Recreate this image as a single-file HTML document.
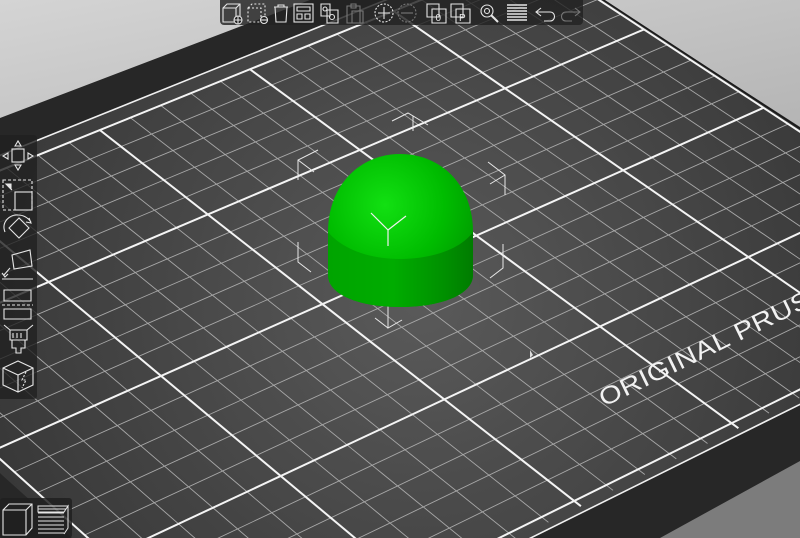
<!DOCTYPE html>
<html><head><meta charset="utf-8">
<style>
html,body{margin:0;padding:0;width:800px;height:538px;overflow:hidden;background:#aaa;}
svg{display:block;font-family:"Liberation Sans",sans-serif;}
</style></head>
<body>
<svg id="s" width="800" height="538" viewBox="0 0 800 538" xmlns="http://www.w3.org/2000/svg" style="position:absolute;left:0;top:0">
<defs>
<linearGradient id="bg" x1="0" y1="0" x2="0.3" y2="1">
<stop offset="0" stop-color="#d4d4d4"/><stop offset="0.5" stop-color="#b4b4b4"/><stop offset="1" stop-color="#7c7c7c"/>
</linearGradient>
<radialGradient id="surf" cx="420" cy="300" r="480" gradientUnits="userSpaceOnUse">
<stop offset="0" stop-color="#5a5a5a"/><stop offset="0.6" stop-color="#444"/><stop offset="1" stop-color="#363636"/>
</radialGradient>
<radialGradient id="dome" cx="385" cy="205" r="100" gradientUnits="userSpaceOnUse">
<stop offset="0" stop-color="#12e012"/><stop offset="0.6" stop-color="#00bc00"/><stop offset="1" stop-color="#009a00"/>
</radialGradient>
<linearGradient id="body" x1="328" y1="0" x2="473" y2="0" gradientUnits="userSpaceOnUse">
<stop offset="0" stop-color="#00a400"/><stop offset="0.45" stop-color="#00ac00"/><stop offset="0.8" stop-color="#009000"/><stop offset="1" stop-color="#007c00"/>
</linearGradient>
</defs>
<rect width="800" height="538" fill="url(#bg)"/>
<polygon points="0,118 310,0 603,0 800,127 800,461 660,538 0,538" fill="#272727"/>
<polygon id="surface" fill="url(#surf)" points=""/>
<g id="grid"></g>
<text x="0" y="0" transform="translate(604,407) rotate(-26) scale(1,0.85)" font-size="29" fill="#f2f2f2" letter-spacing="0.5">ORIGINAL PRUSA</text>
<g stroke="#e8e8e8" stroke-width="1" fill="none">
<path d="M392,121 L408,113 L428,125 M413,116 L413,131"/>
<path d="M318,150 L298,160 L298,180 M298,160 L314,172"/>
<path d="M488,162 L505,175 L505,195 M505,175 L490,184"/>
<path d="M298,242 L298,262 L311,272"/>
<path d="M503,244 L503,268 L490,278"/>
<path d="M388,304 L388,328 L402,320 M388,328 L375,318"/>
</g>
<path d="M328,232 C328,185 360,154 400,154 C441,154 473,185 473,232 L473,275 C473,295 440,307 400,307 C360,307 328,295 328,275 Z" fill="url(#dome)"/>
<path d="M328,232 C345,252 375,259 400,259 C430,259 460,250 473,232 L473,275 C473,295 440,307 400,307 C360,307 328,295 328,275 Z" fill="url(#body)"/>
<g stroke="#f0f0f0" stroke-width="1.2"><path d="M388,230 L371,213 M388,230 L406,216 M388,230 L388,246"/></g>
<path d="M530,350 L530,358 L533,355 Z" fill="#ddd"/>
<rect x="220" y="-6" width="363" height="31" rx="4" fill="#222" fill-opacity="0.82"/>
<g stroke="#e6e6e6" stroke-width="1.1" fill="none">
<path d="M223,8 L227,4 L240,4 L240,18 L236,22 L223,22 Z M223,8 L236,8 L236,22 M236,8 L240,4"/><circle cx="238" cy="20" r="4" fill="#222"/><path d="M234,20 H242 M238,16 V24"/>
<path d="M248,8 L252,4 L265,4 L265,18 L261,22 L248,22 Z M248,8 L261,8 L261,22" stroke-dasharray="2,2"/><circle cx="264" cy="20" r="3.5" fill="#222"/><path d="M261,20 H267"/>
<path d="M274,7 H288 M278,7 V5 H284 V7 M275,7 L276,22 H286 L287,7"/>
<rect x="294" y="4" width="19" height="18"/><path d="M297,7 H310 V11 H297 Z M297,14 H302 V19 H297 Z M305,14 H310 V19 H305 Z"/>
<path d="M321,4 H330 V16 H321 Z M327,10 H338 V23 H327 Z"/><circle cx="332" cy="17" r="2.5"/><circle cx="325" cy="9" r="2"/>
<g stroke="#777"><path d="M347,6 H360 V23 H347 Z M351,4 H356 V8 H351 Z M352,11 H363 V23 H352 Z"/></g>
<circle cx="384" cy="13" r="9" stroke-dasharray="2,1.5"/><path d="M378,13 H390 M384,7 V19"/>
<g stroke="#777"><circle cx="407" cy="13" r="9" stroke-dasharray="2,1.5"/><path d="M401,13 H413"/></g>
<path d="M427,4 H439 V17 H427 Z M432,9 H446 V23 H432 Z"/><text x="435.5" y="21" font-size="10" fill="#e6e6e6" stroke="none">0</text>
<path d="M451,4 H463 V17 H451 Z M456,9 H470 V23 H456 Z"/><text x="459" y="21" font-size="10" fill="#e6e6e6" stroke="none">P</text>
<circle cx="487" cy="11" r="6"/><circle cx="487" cy="11" r="2.5"/><path d="M491,15 L498,22" stroke-width="2"/>
<path d="M507,5 H527 M507,8 H527 M507,11 H527 M507,14 H527 M507,17 H527 M507,20 H527" stroke-width="1.6"/>
<path d="M541,8 L536,12 L541,16 M536,12 H550 C556,12 556,21 550,21 H544"/>
<g stroke="#777"><path d="M575,8 L580,12 L575,16 M580,12 H566 C560,12 560,21 566,21 H572"/></g>
</g>
<rect x="-5" y="135" width="42" height="264" rx="3" fill="#202020" fill-opacity="0.8"/>
<g stroke="#e6e6e6" stroke-width="1.1" fill="none">
<rect x="12" y="149" width="12" height="13"/><path d="M15,146 L18,141 L21,146 Z M15,165 L18,170 L21,165 Z M8,153 L3,156 L8,159 Z M28,153 L33,156 L28,159 Z"/>
<rect x="3" y="180" width="29" height="30" stroke-dasharray="3,2"/><rect x="15" y="192" width="17" height="18"/><path d="M6,184 L11,184 L11,189 Z" fill="#e6e6e6"/><path d="M8,186 L12,190"/>
<path d="M9,228 L19,218 L29,228 L19,238 Z M5,232 C1,222 10,214 18,215 C24,215 28,218 31,222 M29,218 L31,223 L26,222"/>
<path d="M12,255 L30,250 L32,266 L14,269 Z M10,268 L4,275 M2,273 L5,277 L8,274 M2,279 H33"/>
<path d="M4,290 H31 V301 H4 Z"/><path d="M2,305 H33" stroke-dasharray="3,2"/><path d="M4,309 H31 V319 H4 Z"/>
<path d="M4,325 L10,330 H27 L33,325 M10,330 V340 H27 V330 M12,340 V348 H16 V353 H21 V348 H25 V340 M13,333 V338 M17,333 V338 M21,333 V338"/>
<path d="M3,368 L18,361 L33,368 L33,385 L18,392 L3,385 Z M3,368 L18,375 L33,368 M18,375 V392"/><path d="M26,372 L22,380 L26,380 L22,388" stroke-dasharray="2,1.5"/>
</g>
<rect x="0" y="498" width="72" height="40" rx="3" fill="#202020" fill-opacity="0.85"/>
<g stroke="#e6e6e6" stroke-width="1.1" fill="none">
<path d="M3,510 L9,504 L32,504 L32,528 L26,535 L3,535 Z M3,510 H26 V535 M26,510 L32,504"/>
<path d="M38,506 H68 L64,512 H38 Z M38,509 H66 M38,513 H64 M38,517 H64 M38,521 H64 M38,525 H64 M38,529 H64 M38,533 H64 M64,512 L68,506 V528 L64,534" stroke-width="1"/>
</g>
</svg>
<script>
(function(){
function solve(A,b){var n=b.length;for(var i=0;i<n;i++){var m=i;for(var k=i+1;k<n;k++)if(Math.abs(A[k][i])>Math.abs(A[m][i]))m=k;var t=A[i];A[i]=A[m];A[m]=t;t=b[i];b[i]=b[m];b[m]=t;for(k=i+1;k<n;k++){var f=A[k][i]/A[i][i];for(var j=i;j<n;j++)A[k][j]-=f*A[i][j];b[k]-=f*b[i];}}var x=new Array(n);for(i=n-1;i>=0;i--){var s=b[i];for(j=i+1;j<n;j++)s-=A[i][j]*x[j];x[i]=s/A[i][i];}return x;}
var src=[[0,0],[2,0],[2,2],[0,2]],dst=[[48.6,282],[359.8,150],[600,326.5],[280.7,476]];
var A=[],b=[];
for(var i=0;i<4;i++){var u=src[i][0],v=src[i][1],X=dst[i][0],Y=dst[i][1];
A.push([u,v,1,0,0,0,-u*X,-v*X]);b.push(X);A.push([0,0,0,u,v,1,-u*Y,-v*Y]);b.push(Y);}
var h=solve(A,b);
function P(u,v){var w=h[6]*u+h[7]*v+1;return [(h[0]*u+h[1]*v+h[2])/w,(h[3]*u+h[4]*v+h[5])/w];}
var i0=-1,i1=4,j0=-1,j1=3.05;
var c=[P(i0-0.06,j0-0.12),P(i1+0.02,j0-0.12),P(i1+0.02,j1+0.04),P(i0-0.06,j1+0.04)];
document.getElementById('surface').setAttribute('points',c.map(function(p){return p[0].toFixed(1)+','+p[1].toFixed(1)}).join(' '));
var g=document.getElementById('grid'),ns='http://www.w3.org/2000/svg';
function L(a,bb,col,w){var e=document.createElementNS(ns,'line');e.setAttribute('x1',a[0].toFixed(1));e.setAttribute('y1',a[1].toFixed(1));e.setAttribute('x2',bb[0].toFixed(1));e.setAttribute('y2',bb[1].toFixed(1));e.setAttribute('stroke',col);e.setAttribute('stroke-width',w);g.appendChild(e);}
var k,x;
for(k=0;k<=25;k++){x=i0+k*0.2;if(k%5)L(P(x,j0),P(x,j1),'#a8a8a8',0.9);}
for(k=0;k<=21;k++){x=j0+k*0.2;if(k%5&&x<j1-0.01)L(P(i0,x),P(i1,x),'#a8a8a8',0.9);}
for(k=0;k<=5;k++){x=i0+k;L(P(x,j0),P(x,j1),'#f4f4f4',2);}
for(k=0;k<=4;k++){x=j0+k;L(P(i0,x),P(i1,x),'#f4f4f4',2);}
L(P(i0-0.06,j0-0.12),P(i1+0.02,j0-0.12),'#f0f0f0',1.6);
L(P(i0-0.06,j1+0.04),P(i1+0.02,j1+0.04),'#f0f0f0',1.6);
L(P(i1+0.02,j0-0.12),P(i1+0.02,j1+0.04),'#1a1a1a',1.5);
})();
</script>
</body></html>
